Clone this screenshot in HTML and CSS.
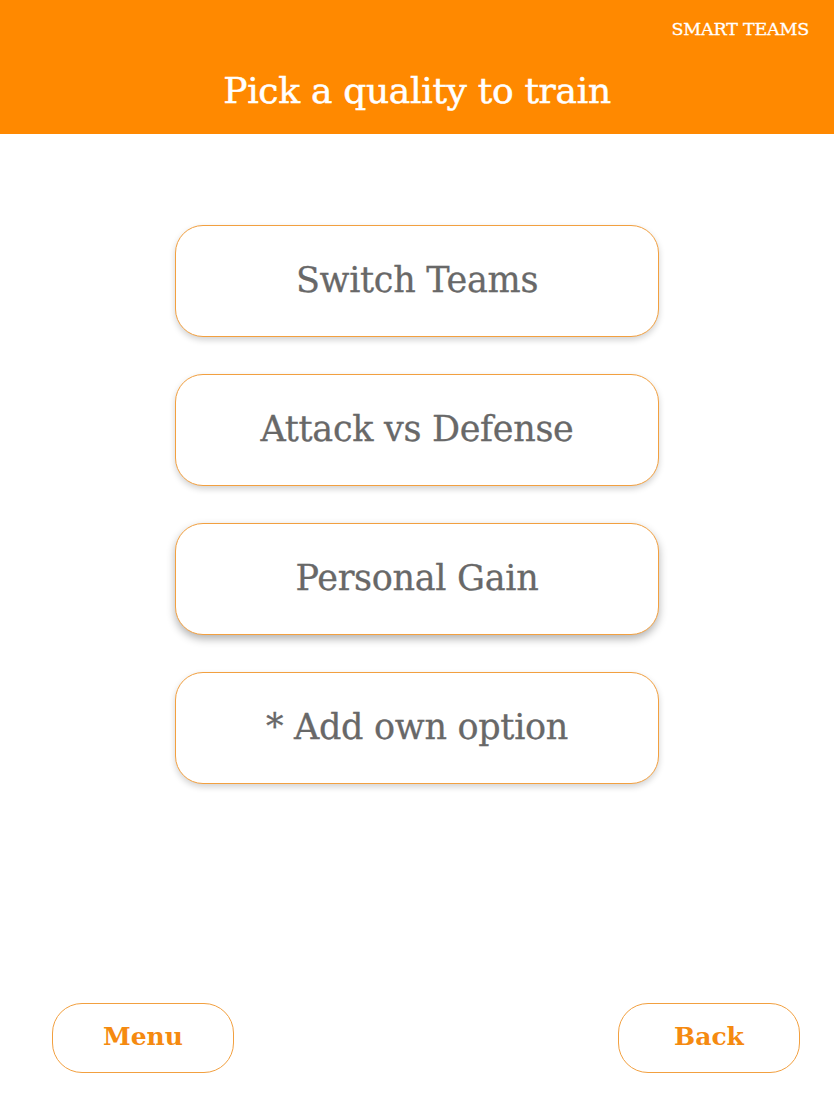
FILE: index.html
```html
<!DOCTYPE html>
<html lang="en">
<head>
<meta charset="utf-8">
<title>Smart Teams - Pick a quality to train</title>
<link rel="stylesheet" href="styles.css">
</head>
<body>
<div class="screen">
  <header class="topbar">
    <div class="brand">SMART TEAMS</div>
    <h1 class="title">Pick a quality to train</h1>
  </header>
  <main class="options">
    <button class="option">Switch Teams</button>
    <button class="option">Attack vs Defense</button>
    <button class="option option-active">Personal Gain</button>
    <button class="option">* Add own option</button>
  </main>
  <footer class="navbar">
    <button class="nav-btn">Menu</button>
    <button class="nav-btn">Back</button>
  </footer>
</div>
</body>
</html>
```

FILE: styles.css
```css
* { box-sizing: border-box; }
html, body { margin: 0; padding: 0; background: #ffffff; }
body {
  font-family: "DejaVu Serif", "Liberation Serif", serif;
}
.screen {
  width: 834px;
  height: 1112px;
  display: flex;
  flex-direction: column;
  overflow: hidden;
}
.topbar {
  background: #ff8900;
  height: 134px;
  display: flex;
  flex-direction: column;
  padding: 18px 25px 0 25px;
}
.brand {
  align-self: flex-end;
  color: #ffffff;
  font-size: 17.5px;
  line-height: 22px;
  letter-spacing: -0.2px;
  -webkit-text-stroke: 0.3px #ffffff;
}
.title {
  margin: 31px 0 0 0;
  text-align: center;
  color: #ffffff;
  font-weight: normal;
  font-size: 36px;
  line-height: 40px;
  letter-spacing: -0.3px;
  -webkit-text-stroke: 0.5px #ffffff;
}
.options {
  display: flex;
  flex-direction: column;
  align-items: center;
  gap: 37px;
  padding-top: 91px;
  flex: 1;
}
.option {
  width: 484px;
  height: 112px;
  background: #ffffff;
  border: 1px solid #f2a040;
  border-radius: 28px;
  box-shadow: 0 3px 6px rgba(0, 0, 0, 0.18);
  font-family: "DejaVu Serif", "Liberation Serif", serif;
  font-size: 35px;
  color: #686868;
  letter-spacing: -0.3px;
  padding: 0;
  padding-bottom: 2px;
  -webkit-text-stroke: 0.3px #686868;
}
.option-active {
  box-shadow: 0 4px 8px rgba(0, 0, 0, 0.3);
}
.navbar {
  display: flex;
  justify-content: space-between;
  padding: 0 34px 39px 52px;
}
.nav-btn {
  width: 182px;
  height: 70px;
  background: #ffffff;
  border: 1px solid #f2a040;
  border-radius: 30px;
  font-family: "DejaVu Serif", "Liberation Serif", serif;
  font-size: 25px;
  font-weight: bold;
  color: #f58a10;
  padding: 0;
  padding-bottom: 4px;
}
```
